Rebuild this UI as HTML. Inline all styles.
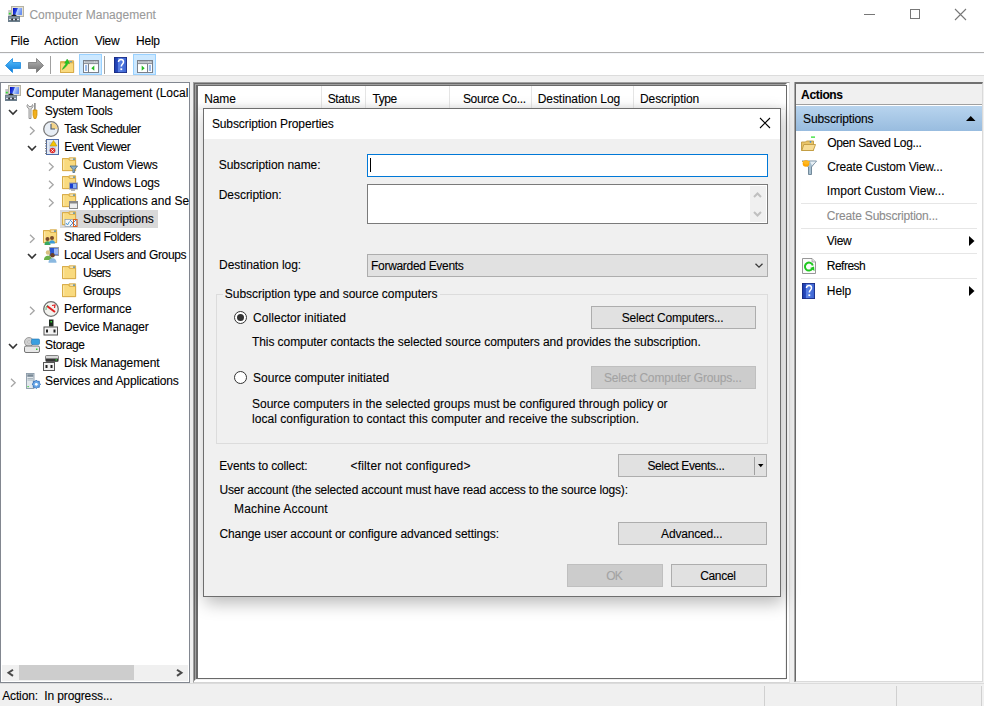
<!DOCTYPE html>
<html><head><meta charset="utf-8">
<style>
*{box-sizing:border-box;margin:0;padding:0}
html,body{width:984px;height:706px;overflow:hidden;background:#f0f0f0;position:relative}
body{font-family:"Liberation Sans",sans-serif;font-size:12px;color:#000}
.a{position:absolute}
.t{position:absolute;font-size:12px;line-height:16px;white-space:pre;color:#000;-webkit-text-stroke:0.1px currentColor}
svg{position:absolute;overflow:visible}
</style></head><body>

<!-- title bar + menu + toolbar (white) -->
<div class="a" style="left:0;top:0;width:984px;height:75px;background:#fff"></div>
<div class="a" style="left:0;top:52px;width:984px;height:1px;background:#b0b0b0"></div>
<div class="a" style="left:0;top:53px;width:984px;height:1px;background:#f4f6fa"></div>
<div class="a" style="left:0;top:75px;width:984px;height:7px;background:#f0f0f0;border-top:1px solid #dcdcdc"></div>

<!-- title icon -->
<svg style="left:8px;top:6px" width="16" height="16" viewBox="0 0 16 16"><defs><linearGradient id="scr2" x1="0" y1="0" x2="1" y2="0.3"><stop offset="0" stop-color="#0008b8"/><stop offset="0.45" stop-color="#2a48e0"/><stop offset="0.55" stop-color="#b8d0ff"/><stop offset="1" stop-color="#6a90f0"/></linearGradient></defs>
<rect x="3.5" y="0.5" width="12" height="10" fill="#e4e0d2" stroke="#b5b2a4"/>
<rect x="5" y="2" width="9" height="7" fill="url(#scr2)"/>
<rect x="0.3" y="4" width="3" height="6" fill="#c4c4c4"/><rect x="0.8" y="6.8" width="2" height="1.6" fill="#33dd33"/>
<path d="M3.5 10.5Q6 8 8.5 10.5" fill="none" stroke="#222" stroke-width="1.2"/>
<rect x="0" y="10" width="12" height="6" fill="#6c7e8c"/><rect x="1" y="11.5" width="10" height="1" fill="#a0acb6"/>
<rect x="3.5" y="12.5" width="1.3" height="2" fill="#222"/><rect x="7.3" y="12.5" width="1.3" height="2" fill="#222"/>
<rect x="1" y="13" width="2" height="1" fill="#dde"/><rect x="5" y="13" width="2" height="1" fill="#dde"/><rect x="9" y="13" width="2" height="1" fill="#dde"/></svg>

<!-- window controls -->
<div class="a" style="left:864px;top:14px;width:11px;height:1px;background:#777"></div>
<div class="a" style="left:910px;top:9px;width:10px;height:10px;border:1px solid #777"></div>
<svg style="left:955px;top:9px" width="11" height="11" viewBox="0 0 11 11"><path d="M0 0L11 11M11 0L0 11" stroke="#777" stroke-width="1.1"/></svg>

<!-- toolbar icons -->
<svg style="left:5px;top:58px" width="16" height="15" viewBox="0 0 16 15">
  <defs><linearGradient id="gb" x1="0" y1="0" x2="0" y2="1"><stop offset="0" stop-color="#5cc4ff"/><stop offset="1" stop-color="#0a78d8"/></linearGradient></defs>
  <path d="M0.5 7.5L7.5 0.5V4.5H15.5V10.5H7.5V14.5Z" fill="url(#gb)" stroke="#1a8ae0" stroke-width="0.8"/>
</svg>
<svg style="left:28px;top:58px" width="16" height="15" viewBox="0 0 16 15">
  <defs><linearGradient id="gg" x1="0" y1="0" x2="0" y2="1"><stop offset="0" stop-color="#b8b8b8"/><stop offset="1" stop-color="#6e6e6e"/></linearGradient></defs>
  <path d="M15.5 7.5L8.5 0.5V4.5H0.5V10.5H8.5V14.5Z" fill="url(#gg)" stroke="#777" stroke-width="0.8"/>
</svg>
<div class="a" style="left:50px;top:56px;width:1px;height:18px;background:#a0a0a0"></div>
<svg style="left:60px;top:58px" width="15" height="15" viewBox="0 0 15 15">
<path d="M0.5 3.6H6.2L7.2 2.8H13.6V14.5H0.5Z" fill="#ecc25a" stroke="#d2a440" stroke-width="0.8"/>
<rect x="9.5" y="3.4" width="2.5" height="1.1" fill="#2e8de6"/>
<path d="M0.5 4.8H13.6V14.5H0.5Z" fill="#f9da7e" stroke="#d2a440" stroke-width="0.8"/>
<path d="M2.3 11.5C3.5 8.5 5 7.5 6.3 5.5L4.6 5.2L7.2 1L9.6 5.6L7.9 5.6C7 8 5 10 2.3 11.5Z" fill="#22c822" stroke="#1a9a1a" stroke-width="0.4"/>
</svg>
<div class="a" style="left:79px;top:54px;width:23px;height:21px;background:#cce8ff;border:1px solid #99d1ff"></div>
<svg style="left:83px;top:60px" width="16" height="13" viewBox="0 0 16 13">
<rect x="0.5" y="0.5" width="15" height="12" fill="#fff" stroke="#7a808a"/>
<rect x="1" y="1" width="14" height="2.5" fill="#dfe2e6"/><path d="M1.5 1.9H11.5" stroke="#8a9099" stroke-width="0.9"/><rect x="12.3" y="1.4" width="1" height="1" fill="#7a808a"/><rect x="13.8" y="1.4" width="1" height="1" fill="#7a808a"/>
<path d="M1 3.6H15" stroke="#7a808a" stroke-width="0.9"/><path d="M5.5 4V12" stroke="#7a808a" stroke-width="1"/><rect x="2" y="5.5" width="2.2" height="1" fill="#3a7ad8"/><rect x="2" y="7.5" width="2.2" height="1" fill="#3a7ad8"/><rect x="2" y="9.5" width="2.2" height="1" fill="#3a7ad8"/><path d="M11.3 5.5V10.8L8.3 8.15Z" fill="#22bb22"/></svg>
<div class="a" style="left:104px;top:56px;width:1px;height:18px;background:#a0a0a0"></div>
<svg style="left:114px;top:57px" width="13" height="16" viewBox="0 0 13 16"><defs><linearGradient id="hb2" x1="0" y1="0" x2="1" y2="0"><stop offset="0" stop-color="#1a3aa8"/><stop offset="0.3" stop-color="#2a4cc0"/><stop offset="0.35" stop-color="#5a82e6"/><stop offset="1" stop-color="#3a62d0"/></linearGradient></defs>
<rect x="0" y="0" width="13" height="16" fill="url(#hb2)"/><rect x="0.4" y="0.4" width="12.2" height="15.2" fill="none" stroke="#1a2a80" stroke-width="0.8"/>
<path d="M4.5 5C4.5 3.2 5.8 2.5 7 2.5C8.5 2.5 9.5 3.5 9.5 5C9.5 6.8 7.3 7.2 7.3 9.5" fill="none" stroke="#fff" stroke-width="1.5"/><rect x="6.4" y="11.3" width="1.8" height="1.8" fill="#fff"/></svg>
<div class="a" style="left:133px;top:54px;width:23px;height:21px;background:#cce8ff;border:1px solid #99d1ff"></div>
<svg style="left:137px;top:60px" width="16" height="13" viewBox="0 0 16 13">
<rect x="0.5" y="0.5" width="15" height="12" fill="#fff" stroke="#7a808a"/>
<rect x="1" y="1" width="14" height="2.5" fill="#dfe2e6"/><path d="M1.5 1.9H11.5" stroke="#8a9099" stroke-width="0.9"/><rect x="12.3" y="1.4" width="1" height="1" fill="#7a808a"/><rect x="13.8" y="1.4" width="1" height="1" fill="#7a808a"/>
<path d="M1 3.6H15" stroke="#7a808a" stroke-width="0.9"/><path d="M10.5 4V12" stroke="#7a808a" stroke-width="1"/><rect x="11.8" y="5.5" width="2.2" height="1" fill="#3a7ad8"/><rect x="11.8" y="7.5" width="2.2" height="1" fill="#3a7ad8"/><rect x="11.8" y="9.5" width="2.2" height="1" fill="#3a7ad8"/><path d="M4.7 5.5V10.8L7.7 8.15Z" fill="#22bb22"/></svg>

<!-- LEFT PANEL -->
<div class="a" style="left:0;top:82px;width:190px;height:601px;background:#fff;border:1px solid #828790"></div>
<div class="a" style="left:0;top:0;width:189px;height:681px;overflow:hidden">
<div class="a" style="left:60px;top:210px;width:98px;height:18px;background:#d9d9d9"></div>
<svg style="left:5px;top:85px" width="16" height="16" viewBox="0 0 16 16"><defs><linearGradient id="scr" x1="0" y1="0" x2="1" y2="0.3"><stop offset="0" stop-color="#0008b8"/><stop offset="0.45" stop-color="#2a48e0"/><stop offset="0.55" stop-color="#b8d0ff"/><stop offset="1" stop-color="#6a90f0"/></linearGradient></defs>
<rect x="3.5" y="0.5" width="12" height="10" fill="#e4e0d2" stroke="#b5b2a4"/>
<rect x="5" y="2" width="9" height="7" fill="url(#scr)"/>
<rect x="0.3" y="4" width="3" height="6" fill="#c4c4c4"/><rect x="0.8" y="6.8" width="2" height="1.6" fill="#33dd33"/>
<path d="M3.5 10.5Q6 8 8.5 10.5" fill="none" stroke="#222" stroke-width="1.2"/>
<rect x="0" y="10" width="12" height="6" fill="#6c7e8c"/><rect x="1" y="11.5" width="10" height="1" fill="#a0acb6"/>
<rect x="3.5" y="12.5" width="1.3" height="2" fill="#222"/><rect x="7.3" y="12.5" width="1.3" height="2" fill="#222"/>
<rect x="1" y="13" width="2" height="1" fill="#dde"/><rect x="5" y="13" width="2" height="1" fill="#dde"/><rect x="9" y="13" width="2" height="1" fill="#dde"/></svg>
<svg style="left:26px;top:103px" width="16" height="16" viewBox="0 0 16 16"><path d="M1.5 1.5C0.5 3 1 5 3 5.5V15.5H5V5.5C7 5 7.5 3 6.5 1.5L5.5 3.5H3Z" fill="#e6e6e6" stroke="#8c8c8c" stroke-width="0.9"/>
<rect x="8.3" y="0" width="1.2" height="7" fill="#666"/>
<path d="M7 7H11V12L10 15.5H8L7 12Z" fill="#f2b01e" stroke="#c98a00" stroke-width="0.7"/></svg>
<svg style="left:7.5px;top:109px" width="10" height="7" viewBox="0 0 10 7"><path d="M1 1L5 5L9 1" fill="none" stroke="#333" stroke-width="1.6"/></svg>
<svg style="left:43px;top:121px" width="16" height="16" viewBox="0 0 16 16"><circle cx="8" cy="8" r="7.3" fill="#e8eef5" stroke="#7a7a7a" stroke-width="1.3"/>
<path d="M8 8V1.5A6.5 6.5 0 0 1 14.5 8Z" fill="#f3d48a"/>
<path d="M8 3V8H12" fill="none" stroke="#4a5a70" stroke-width="1.1"/></svg>
<svg style="left:29.0px;top:126px" width="7" height="10" viewBox="0 0 7 10"><path d="M1 0.8L5.2 4.8L1 8.8" fill="none" stroke="#a6a6a6" stroke-width="1.3"/></svg>
<svg style="left:44px;top:139px" width="16" height="16" viewBox="0 0 16 16"><rect x="2.5" y="0.5" width="12" height="15" fill="#dfe8f4" stroke="#4d6aa8"/>
<path d="M1 2H3M1 4.5H3M1 7H3M1 9.5H3M1 12H3M1 14.5H3" stroke="#777" stroke-width="0.9"/>
<path d="M5 4H12M5 6H12M5 8H12M5 10H12M5 12H12" stroke="#9fb6d8" stroke-width="0.8"/>
<path d="M9.5 1.5L13 7H6Z" fill="#f5c400" stroke="#b08800" stroke-width="0.5"/>
<circle cx="8.5" cy="11.5" r="2.8" fill="#e03030"/><path d="M7.3 10.3L9.7 12.7M9.7 10.3L7.3 12.7" stroke="#fff" stroke-width="0.8"/></svg>
<svg style="left:26.5px;top:145px" width="10" height="7" viewBox="0 0 10 7"><path d="M1 1L5 5L9 1" fill="none" stroke="#333" stroke-width="1.6"/></svg>
<svg style="left:62px;top:157px" width="16" height="16" viewBox="0 0 16 16"><path d="M0.5 1.6H6.2L7.2 0.8H13.6V13.6H0.5Z" fill="#ecc25a" stroke="#d2a440" stroke-width="0.8"/>
<rect x="8.2" y="1.6" width="3" height="1.1" fill="#fff"/><rect x="11" y="1.6" width="2" height="1.1" fill="#2e8de6"/>
<path d="M0.5 1.6H6.2L7.4 3.3H13.6V13.6H0.5Z" fill="#f9da7e" stroke="#d2a440" stroke-width="0.8"/>
<rect x="1.2" y="2.6" width="1" height="10.3" fill="#fdeab0"/><path d="M8 9H15.5L12.6 12.5V15.5H10.9V12.5Z" fill="#8fb2c8" stroke="#4a6a80" stroke-width="0.8"/></svg>
<svg style="left:48.0px;top:162px" width="7" height="10" viewBox="0 0 7 10"><path d="M1 0.8L5.2 4.8L1 8.8" fill="none" stroke="#a6a6a6" stroke-width="1.3"/></svg>
<svg style="left:62px;top:175px" width="16" height="16" viewBox="0 0 16 16"><path d="M0.5 1.6H6.2L7.2 0.8H13.6V13.6H0.5Z" fill="#ecc25a" stroke="#d2a440" stroke-width="0.8"/>
<rect x="8.2" y="1.6" width="3" height="1.1" fill="#fff"/><rect x="11" y="1.6" width="2" height="1.1" fill="#2e8de6"/>
<path d="M0.5 1.6H6.2L7.4 3.3H13.6V13.6H0.5Z" fill="#f9da7e" stroke="#d2a440" stroke-width="0.8"/>
<rect x="1.2" y="2.6" width="1" height="10.3" fill="#fdeab0"/><rect x="7.5" y="8" width="8" height="6" fill="#1a3fd0" stroke="#a0a0a0"/><rect x="11" y="9" width="3.5" height="4" fill="#8ab0f0"/><rect x="9" y="14.5" width="4" height="1.2" fill="#999"/></svg>
<svg style="left:48.0px;top:180px" width="7" height="10" viewBox="0 0 7 10"><path d="M1 0.8L5.2 4.8L1 8.8" fill="none" stroke="#a6a6a6" stroke-width="1.3"/></svg>
<svg style="left:62px;top:193px" width="16" height="16" viewBox="0 0 16 16"><path d="M0.5 1.6H6.2L7.2 0.8H13.6V13.6H0.5Z" fill="#ecc25a" stroke="#d2a440" stroke-width="0.8"/>
<rect x="8.2" y="1.6" width="3" height="1.1" fill="#fff"/><rect x="11" y="1.6" width="2" height="1.1" fill="#2e8de6"/>
<path d="M0.5 1.6H6.2L7.4 3.3H13.6V13.6H0.5Z" fill="#f9da7e" stroke="#d2a440" stroke-width="0.8"/>
<rect x="1.2" y="2.6" width="1" height="10.3" fill="#fdeab0"/><rect x="7.5" y="8.5" width="8" height="7" fill="#eeeeee" stroke="#888"/><rect x="8" y="9" width="7" height="1.5" fill="#888"/></svg>
<svg style="left:48.0px;top:198px" width="7" height="10" viewBox="0 0 7 10"><path d="M1 0.8L5.2 4.8L1 8.8" fill="none" stroke="#a6a6a6" stroke-width="1.3"/></svg>
<svg style="left:62px;top:211px" width="16" height="16" viewBox="0 0 16 16"><path d="M0.5 1.6H6.2L7.2 0.8H13.6V13.6H0.5Z" fill="#ecc25a" stroke="#d2a440" stroke-width="0.8"/>
<rect x="8.2" y="1.6" width="3" height="1.1" fill="#fff"/><rect x="11" y="1.6" width="2" height="1.1" fill="#2e8de6"/>
<path d="M0.5 1.6H6.2L7.4 3.3H13.6V13.6H0.5Z" fill="#f9da7e" stroke="#d2a440" stroke-width="0.8"/>
<rect x="1.2" y="2.6" width="1" height="10.3" fill="#fdeab0"/><rect x="3" y="8.5" width="12" height="7" fill="#f4f8fc" stroke="#8899aa" stroke-width="0.7"/><path d="M8 9L14 15M14 9L8 15" stroke="#5a8ac8" stroke-width="1"/><rect x="11.5" y="8.5" width="3.5" height="7" fill="none" stroke="#e06020" stroke-width="1"/><path d="M4 12L5.5 14L7.5 10.5" fill="none" stroke="#3a90d0" stroke-width="0.9"/></svg>
<svg style="left:43px;top:229px" width="16" height="16" viewBox="0 0 16 16"><path d="M0.5 1.6H6.2L7.2 0.8H13.6V13.6H0.5Z" fill="#ecc25a" stroke="#d2a440" stroke-width="0.8"/>
<rect x="8.2" y="1.6" width="3" height="1.1" fill="#fff"/><rect x="11" y="1.6" width="2" height="1.1" fill="#2e8de6"/>
<path d="M0.5 1.6H6.2L7.4 3.3H13.6V13.6H0.5Z" fill="#f9da7e" stroke="#d2a440" stroke-width="0.8"/>
<rect x="1.2" y="2.6" width="1" height="10.3" fill="#fdeab0"/><circle cx="4.5" cy="10" r="2" fill="#7a4a2a"/><path d="M1.5 16C1.5 13 3 12.3 4.5 12.3S7.5 13 7.5 16Z" fill="#3aa860"/>
<circle cx="9" cy="9" r="2" fill="#7a4a2a"/><path d="M6 14.5C6 11.8 7.5 11.2 9 11.2S12 11.8 12 14.5Z" fill="#3a9ad8"/></svg>
<svg style="left:29.0px;top:234px" width="7" height="10" viewBox="0 0 7 10"><path d="M1 0.8L5.2 4.8L1 8.8" fill="none" stroke="#a6a6a6" stroke-width="1.3"/></svg>
<svg style="left:43px;top:247px" width="16" height="16" viewBox="0 0 16 16"><rect x="6.5" y="0.5" width="9" height="8" fill="#2a55d0" stroke="#a0a0a0"/><rect x="11" y="1.5" width="4" height="6" fill="#9cb8f2"/>
<circle cx="5" cy="5.5" r="2.2" fill="#d8c080"/><path d="M1 13C1 9.8 3 8.8 5 8.8S9 9.8 9 13Z" fill="#6ab04a"/>
<circle cx="9.5" cy="8.3" r="2.3" fill="#6a4028"/><path d="M5.5 15.8C5.5 12.5 7.5 11.3 9.5 11.3S13.5 12.5 13.5 15.8Z" fill="#8ab8e0"/></svg>
<svg style="left:26.5px;top:253px" width="10" height="7" viewBox="0 0 10 7"><path d="M1 1L5 5L9 1" fill="none" stroke="#333" stroke-width="1.6"/></svg>
<svg style="left:62px;top:265px" width="16" height="16" viewBox="0 0 16 16"><path d="M0.5 1.6H6.2L7.2 0.8H13.6V13.6H0.5Z" fill="#ecc25a" stroke="#d2a440" stroke-width="0.8"/>
<rect x="8.2" y="1.6" width="3" height="1.1" fill="#fff"/><rect x="11" y="1.6" width="2" height="1.1" fill="#2e8de6"/>
<path d="M0.5 1.6H6.2L7.4 3.3H13.6V13.6H0.5Z" fill="#f9da7e" stroke="#d2a440" stroke-width="0.8"/>
<rect x="1.2" y="2.6" width="1" height="10.3" fill="#fdeab0"/></svg>
<svg style="left:62px;top:283px" width="16" height="16" viewBox="0 0 16 16"><path d="M0.5 1.6H6.2L7.2 0.8H13.6V13.6H0.5Z" fill="#ecc25a" stroke="#d2a440" stroke-width="0.8"/>
<rect x="8.2" y="1.6" width="3" height="1.1" fill="#fff"/><rect x="11" y="1.6" width="2" height="1.1" fill="#2e8de6"/>
<path d="M0.5 1.6H6.2L7.4 3.3H13.6V13.6H0.5Z" fill="#f9da7e" stroke="#d2a440" stroke-width="0.8"/>
<rect x="1.2" y="2.6" width="1" height="10.3" fill="#fdeab0"/></svg>
<svg style="left:43px;top:301px" width="16" height="16" viewBox="0 0 16 16"><circle cx="8" cy="8" r="7.3" fill="#f2f2ee" stroke="#707070" stroke-width="1.3"/>
<path d="M4 5L12 11" stroke="#e02020" stroke-width="2"/><path d="M9 4.5L12 4L11.5 7" stroke="#e02020" stroke-width="1.2" fill="none"/><path d="M3 9A5 5 0 0 1 5 4" stroke="#3a9a5a" stroke-width="0.8" fill="none"/></svg>
<svg style="left:29.0px;top:306px" width="7" height="10" viewBox="0 0 7 10"><path d="M1 0.8L5.2 4.8L1 8.8" fill="none" stroke="#a6a6a6" stroke-width="1.3"/></svg>
<svg style="left:43px;top:319px" width="16" height="16" viewBox="0 0 16 16"><rect x="6" y="0.5" width="4.5" height="7" fill="#1e2a20"/><rect x="7.5" y="2" width="1.5" height="1.5" fill="#33dd33"/>
<rect x="1" y="8" width="13.5" height="8" fill="#f2f2f2" stroke="#555" stroke-width="1"/><rect x="3" y="10.5" width="2" height="3" fill="#222"/><rect x="10.5" y="10.5" width="2" height="3" fill="#222"/></svg>
<svg style="left:24px;top:337px" width="16" height="16" viewBox="0 0 16 16"><circle cx="5" cy="5" r="4.5" fill="#d0d0d0" stroke="#8a8a8a" stroke-width="0.8"/><circle cx="5" cy="5" r="1.2" fill="#fff" stroke="#888" stroke-width="0.5"/>
<rect x="7.5" y="2" width="8" height="5.5" rx="1" fill="#3aa0e0" stroke="#1a70b0" stroke-width="0.6"/>
<rect x="0.5" y="9" width="15" height="6.5" rx="1.5" fill="#e8e8e8" stroke="#666" stroke-width="0.9"/><rect x="12" y="11.5" width="1.5" height="1.5" fill="#33cc33"/></svg>
<svg style="left:7.5px;top:343px" width="10" height="7" viewBox="0 0 10 7"><path d="M1 1L5 5L9 1" fill="none" stroke="#333" stroke-width="1.6"/></svg>
<svg style="left:43px;top:355px" width="16" height="16" viewBox="0 0 16 16"><rect x="2.5" y="0.5" width="13" height="6" rx="1" fill="#d8d8d8" stroke="#666" stroke-width="0.8"/><rect x="3" y="3.5" width="12" height="3" fill="#333"/><rect x="12.5" y="4.3" width="1.5" height="1.2" fill="#33dd33"/>
<rect x="0.5" y="7.5" width="11" height="8" fill="#f2f2f2" stroke="#555" stroke-width="1"/><rect x="2.5" y="10" width="2" height="3" fill="#222"/><rect x="7.5" y="10" width="2" height="3" fill="#222"/></svg>
<svg style="left:25px;top:373px" width="16" height="16" viewBox="0 0 16 16"><rect x="1.5" y="0.5" width="7.5" height="15" fill="#e2e8ec" stroke="#8a9aa8" stroke-width="0.9"/><rect x="2.3" y="1.3" width="6" height="2.5" fill="#7a8a98"/><path d="M2.5 5.5H8M2.5 7H8" stroke="#9aa8b4" stroke-width="0.8"/><rect x="2.5" y="13" width="1.2" height="1.2" fill="#33cc33"/>
<path d="M15.60 11.30 L14.26 12.52 L14.34 14.34 L12.52 14.26 L11.30 15.60 L10.08 14.26 L8.26 14.34 L8.34 12.52 L7.00 11.30 L8.34 10.08 L8.26 8.26 L10.08 8.34 L11.30 7.00 L12.52 8.34 L14.34 8.26 L14.26 10.08Z" fill="#6aa8e8" stroke="#2a68b8" stroke-width="0.8"/><circle cx="11.3" cy="11.3" r="1.4" fill="#fff"/></svg>
<svg style="left:10.0px;top:378px" width="7" height="10" viewBox="0 0 7 10"><path d="M1 0.8L5.2 4.8L1 8.8" fill="none" stroke="#a6a6a6" stroke-width="1.3"/></svg>
<div class="t tree" style="left:26.3px;top:85px;">Computer Management (Local</div>
<div class="t tree" style="left:44.8px;top:103px;letter-spacing:-0.287px;">System Tools</div>
<div class="t tree" style="left:64.3px;top:121px;letter-spacing:-0.410px;">Task Scheduler</div>
<div class="t tree" style="left:64.3px;top:139px;letter-spacing:-0.365px;">Event Viewer</div>
<div class="t tree" style="left:83.0px;top:157px;letter-spacing:-0.157px;">Custom Views</div>
<div class="t tree" style="left:83.0px;top:175px;letter-spacing:-0.112px;">Windows Logs</div>
<div class="t tree" style="left:83.0px;top:193px;">Applications and Services Logs</div>
<div class="t tree" style="left:83.0px;top:211px;letter-spacing:-0.111px;">Subscriptions</div>
<div class="t tree" style="left:64.1px;top:229px;letter-spacing:-0.389px;">Shared Folders</div>
<div class="t tree" style="left:64.1px;top:247px;letter-spacing:-0.328px;">Local Users and Groups</div>
<div class="t tree" style="left:83.0px;top:265px;letter-spacing:-0.829px;">Users</div>
<div class="t tree" style="left:83.0px;top:283px;letter-spacing:-0.327px;">Groups</div>
<div class="t tree" style="left:64.1px;top:301px;letter-spacing:-0.118px;">Performance</div>
<div class="t tree" style="left:64.1px;top:319px;letter-spacing:-0.212px;">Device Manager</div>
<div class="t tree" style="left:45.0px;top:337px;letter-spacing:-0.333px;">Storage</div>
<div class="t tree" style="left:64.1px;top:355px;letter-spacing:-0.088px;">Disk Management</div>
<div class="t tree" style="left:45.0px;top:373px;letter-spacing:-0.122px;">Services and Applications</div>
</div>

<!-- scrollbar -->
<div class="a" style="left:2px;top:665px;width:186px;height:16px;background:#f0f0f0"></div>
<div class="a" style="left:19px;top:665px;width:115px;height:15px;background:#cdcdcd"></div>
<svg style="left:7px;top:669px" width="7" height="8" viewBox="0 0 7 8"><path d="M6 0.7L1.5 3.8L6 6.9" fill="none" stroke="#4a4a4a" stroke-width="2"/></svg>
<svg style="left:176px;top:669px" width="7" height="8" viewBox="0 0 7 8"><path d="M1 0.7L5.5 3.8L1 6.9" fill="none" stroke="#4a4a4a" stroke-width="2"/></svg>

<!-- MIDDLE PANEL frame -->
<div class="a" style="left:193px;top:82px;width:597px;height:601px;background:#fff;border-left:1px solid #a0a0a0;border-top:1px solid #a0a0a0;border-right:1px solid #e3e3e3;border-bottom:1px solid #d5d5d5"></div>
<div class="a" style="left:194px;top:83px;width:593px;height:598px;border-left:1px solid #696969;border-top:1px solid #696969;border-right:1px solid #fff;border-bottom:1px solid #fff"></div>
<div class="a" style="left:195px;top:84px;width:591px;height:596px;border-left:1px solid #a0a0a0;border-top:1px solid #a0a0a0;border-right:1px solid #f0f0f0;border-bottom:1px solid #f0f0f0"></div>
<div class="a" style="left:196px;top:85px;width:591px;height:594px;border-left:2px solid #696969;border-top:1px solid #696969;border-right:1px solid #696969;border-bottom:1px solid #696969"></div>
<!-- list header -->
<div class="a" style="left:198px;top:86px;width:588px;height:24px;background:linear-gradient(#fff 0,#fff 70%,#f2f2f2 100%)"></div>
<div class="a" style="left:321px;top:86px;width:1px;height:24px;background:#e5e5e5"></div>
<div class="a" style="left:365px;top:86px;width:1px;height:24px;background:#e5e5e5"></div>
<div class="a" style="left:449px;top:86px;width:1px;height:24px;background:#e5e5e5"></div>
<div class="a" style="left:531px;top:86px;width:1px;height:24px;background:#e5e5e5"></div>
<div class="a" style="left:633px;top:86px;width:1px;height:24px;background:#e5e5e5"></div>

<!-- ACTIONS PANEL -->
<div class="a" style="left:794px;top:82px;width:1px;height:600px;background:#a8a8a8"></div>
<div class="a" style="left:795px;top:82px;width:188px;height:600px;background:#fff;border-left:1px solid #696969;border-top:2px solid #707070;border-right:1px solid #dadada;border-bottom:1px solid #dadada"></div>
<div class="a" style="left:796px;top:84px;width:186px;height:21px;background:#f0f0f0;border-bottom:1px solid #a0a0a0"></div>
<div class="a" style="left:796px;top:106px;width:186px;height:25px;background:linear-gradient(#b8d4ee,#98bcdf)"></div>
<svg style="left:966px;top:116px" width="9.5" height="5" viewBox="0 0 9.5 5"><path d="M0 5L4.75 0L9.5 5Z" fill="#000"/></svg>
<div class="a" style="left:801px;top:203px;width:176px;height:1px;background:#e6e6e6"></div>
<div class="a" style="left:801px;top:228px;width:176px;height:1px;background:#e6e6e6"></div>
<div class="a" style="left:801px;top:253px;width:176px;height:1px;background:#e6e6e6"></div>
<div class="a" style="left:801px;top:278px;width:176px;height:1px;background:#e6e6e6"></div>
<svg style="left:801px;top:136px" width="16" height="16" viewBox="0 0 16 16"><rect x="10" y="0.5" width="4" height="1.2" fill="#22dd22"/>
<path d="M0.5 6H4.5L5.5 5H12.5V14.5H0.5Z" fill="#e9c468" stroke="#c09a40" stroke-width="0.9"/>
<circle cx="9.5" cy="5.8" r="0.9" fill="#3a8ae0"/>
<path d="M2.8 8.5H14.5L12.3 14.5H0.8Z" fill="#f7dc94" stroke="#c09a40" stroke-width="0.9"/></svg>
<svg style="left:801px;top:160px" width="16" height="16" viewBox="0 0 16 16"><path d="M1 1H15.5L10.5 7V14.5H7.5V7Z" fill="#a8c0d0" stroke="#5a7488" stroke-width="0.8"/>
<path d="M9 1.5H15L11 5.5Z" fill="#e8f0f6"/>
<circle cx="5" cy="3.5" r="3.3" fill="#ffa500"/><path d="M1 1H9L7 4.5H4Z" fill="#ffb820"/></svg>
<svg style="left:802px;top:258px" width="16" height="16" viewBox="0 0 16 16"><path d="M0.5 0.5H10L13.5 4V15.5H0.5Z" fill="#fbfbfb" stroke="#8c8c8c" stroke-width="0.9"/><path d="M10 0.5V4H13.5" fill="#e0e0e0" stroke="#8c8c8c" stroke-width="0.6"/>
<path d="M10.3 10.8A4 4 0 1 1 10.8 7.5" fill="none" stroke="#1ec81e" stroke-width="2"/><path d="M8 10L12.5 13L12 8.5Z" fill="#1ec81e"/></svg>
<svg style="left:802px;top:283px" width="16" height="16" viewBox="0 0 16 16"><defs><linearGradient id="hb" x1="0" y1="0" x2="1" y2="0"><stop offset="0" stop-color="#1a3aa8"/><stop offset="0.3" stop-color="#2a4cc0"/><stop offset="0.35" stop-color="#5a82e6"/><stop offset="1" stop-color="#3a62d0"/></linearGradient></defs>
<rect x="0" y="0" width="13" height="16" fill="url(#hb)"/><rect x="0.4" y="0.4" width="12.2" height="15.2" fill="none" stroke="#1a2a80" stroke-width="0.8"/>
<path d="M4.5 5C4.5 3.2 5.8 2.5 7 2.5C8.5 2.5 9.5 3.5 9.5 5C9.5 6.8 7.3 7.2 7.3 9.5" fill="none" stroke="#fff" stroke-width="1.5"/><rect x="6.4" y="11.3" width="1.8" height="1.8" fill="#fff"/></svg>
<svg style="left:969px;top:236px" width="6" height="10" viewBox="0 0 6 10"><path d="M0 0L5.5 5L0 10Z" fill="#000"/></svg>
<svg style="left:969px;top:286px" width="6" height="10" viewBox="0 0 6 10"><path d="M0 0L5.5 5L0 10Z" fill="#000"/></svg>

<!-- STATUS BAR -->
<div class="a" style="left:0;top:683px;width:984px;height:23px;background:#f0f0f0;border-top:1px solid #dcdcdc"></div>
<div class="a" style="left:764px;top:686px;width:1px;height:20px;background:#d0d0d0"></div>
<div class="a" style="left:896px;top:686px;width:1px;height:20px;background:#d0d0d0"></div>
<div class="a" style="left:981px;top:686px;width:1px;height:20px;background:#d0d0d0"></div>

<div class="t " style="left:29.4px;top:7px;letter-spacing:0.027px;color:#9a9a9a">Computer Management</div>
<div class="t " style="left:10.4px;top:33px;letter-spacing:-0.136px;">File</div>
<div class="t " style="left:44.3px;top:33px;letter-spacing:0.107px;">Action</div>
<div class="t " style="left:94.7px;top:33px;letter-spacing:-0.274px;">View</div>
<div class="t " style="left:136.1px;top:33px;letter-spacing:-0.272px;">Help</div>
<div class="t " style="left:204.2px;top:91px;letter-spacing:-0.129px;">Name</div>
<div class="t " style="left:327.7px;top:91px;letter-spacing:-0.339px;">Status</div>
<div class="t " style="left:372.5px;top:91px;letter-spacing:-0.454px;">Type</div>
<div class="t " style="left:462.9px;top:91px;letter-spacing:-0.325px;">Source Co...</div>
<div class="t " style="left:537.7px;top:91px;letter-spacing:-0.059px;">Destination Log</div>
<div class="t " style="left:640.0px;top:91px;letter-spacing:-0.076px;">Description</div>
<div class="t " style="left:801.1px;top:87px;letter-spacing:-0.346px;"><b>Actions</b></div>
<div class="t " style="left:803.1px;top:111px;letter-spacing:-0.127px;">Subscriptions</div>
<div class="t " style="left:827.2px;top:135px;letter-spacing:-0.340px;">Open Saved Log...</div>
<div class="t " style="left:827.2px;top:159px;letter-spacing:-0.180px;">Create Custom View...</div>
<div class="t " style="left:826.8px;top:183px;letter-spacing:0.026px;">Import Custom View...</div>
<div class="t " style="left:826.8px;top:208px;letter-spacing:-0.190px;color:#8c8c8c">Create Subscription...</div>
<div class="t " style="left:826.8px;top:233px;letter-spacing:-0.299px;">View</div>
<div class="t " style="left:826.8px;top:258px;letter-spacing:-0.519px;">Refresh</div>
<div class="t " style="left:826.8px;top:283px;letter-spacing:-0.072px;">Help</div>
<div class="t " style="left:2.2px;top:688px;letter-spacing:-0.134px;">Action:&nbsp; In progress...</div>

<!-- DIALOG -->
<div class="a" style="left:203px;top:108px;width:578px;height:489px;background:#f0f0f0;border:1px solid #6e6e6e;box-shadow:2px 6px 16px rgba(0,0,0,0.28)"></div>
<div class="a" style="left:204px;top:109px;width:576px;height:30px;background:#fff"></div>
<svg style="left:760px;top:118px" width="10" height="10" viewBox="0 0 10 10"><path d="M0 0L10 10M10 0L0 10" stroke="#000" stroke-width="1.1"/></svg>

<!-- name input -->
<div class="a" style="left:367px;top:154px;width:401px;height:23px;background:#fff;border:1px solid #0078d7"></div>
<div class="a" style="left:370px;top:158px;width:1px;height:14px;background:#000"></div>
<!-- description -->
<div class="a" style="left:367px;top:184px;width:401px;height:40px;background:#fff;border:1px solid #7a7a7a"></div>
<div class="a" style="left:750px;top:186px;width:16px;height:36px;background:#f0f0f0"></div>
<svg style="left:753px;top:192px" width="9" height="6" viewBox="0 0 9 6"><path d="M1 5L4.5 1.5L8 5" fill="none" stroke="#c0c0c0" stroke-width="2"/></svg>
<svg style="left:753px;top:211px" width="9" height="6" viewBox="0 0 9 6"><path d="M1 1L4.5 4.5L8 1" fill="none" stroke="#c0c0c0" stroke-width="2"/></svg>
<!-- combo -->
<div class="a" style="left:367px;top:254px;width:401px;height:23px;background:#e1e1e1;border:1px solid #adadad"></div>
<svg style="left:755px;top:263px" width="8" height="5" viewBox="0 0 8 5"><path d="M0.5 0.7L4 4.2L7.5 0.7" fill="none" stroke="#3a3a3a" stroke-width="1.3"/></svg>
<!-- group box -->
<div class="a" style="left:216px;top:294px;width:552px;height:150px;border:1px solid #dcdcdc"></div>
<div class="a" style="left:223px;top:290px;width:217px;height:8px;background:#f0f0f0"></div>
<!-- radios -->
<div class="a" style="left:234px;top:311px;width:13px;height:13px;border-radius:50%;background:#fff;border:1px solid #333"></div>
<div class="a" style="left:237px;top:314px;width:7px;height:7px;border-radius:50%;background:#333"></div>
<div class="a" style="left:234px;top:371px;width:13px;height:13px;border-radius:50%;background:#fff;border:1px solid #333"></div>
<!-- buttons -->
<div class="a" style="left:591px;top:306px;width:165px;height:23px;background:#e1e1e1;border:1px solid #adadad"></div>
<div class="a" style="left:591px;top:366px;width:165px;height:23px;background:#cccccc;border:1px solid #bfbfbf"></div>
<div class="a" style="left:618px;top:454px;width:149px;height:23px;background:#e1e1e1;border:1px solid #adadad"></div>
<div class="a" style="left:754px;top:457px;width:1px;height:18px;background:#a0a0a0"></div>
<svg style="left:758px;top:464px" width="5.5" height="3.2" viewBox="0 0 5.5 3.2"><path d="M0 0H5.5L2.75 3.2Z" fill="#000"/></svg>
<div class="a" style="left:618px;top:522px;width:149px;height:23px;background:#e1e1e1;border:1px solid #adadad"></div>
<div class="a" style="left:567px;top:564px;width:96px;height:23px;background:#cccccc;border:1px solid #bfbfbf"></div>
<div class="a" style="left:671px;top:564px;width:96px;height:23px;background:#e1e1e1;border:1px solid #adadad"></div>

<div class="t " style="left:211.9px;top:116px;letter-spacing:-0.098px;">Subscription Properties</div>
<div class="t " style="left:218.8px;top:157px;letter-spacing:-0.057px;">Subscription name:</div>
<div class="t " style="left:218.7px;top:187px;letter-spacing:-0.038px;">Description:</div>
<div class="t " style="left:219.0px;top:257px;letter-spacing:-0.039px;">Destination log:</div>
<div class="t " style="left:371.1px;top:258px;letter-spacing:-0.312px;">Forwarded Events</div>
<div class="t " style="left:224.8px;top:286px;letter-spacing:-0.037px;">Subscription type and source computers</div>
<div class="t " style="left:253.1px;top:310px;letter-spacing:0.050px;">Collector initiated</div>
<div class="t " style="left:621.7px;top:310px;letter-spacing:-0.193px;">Select Computers...</div>
<div class="t " style="left:251.9px;top:334px;letter-spacing:-0.057px;">This computer contacts the selected source computers and provides the subscription.</div>
<div class="t " style="left:253.1px;top:370px;">Source computer initiated</div>
<div class="t " style="left:603.9px;top:370px;letter-spacing:-0.171px;color:#a3a3a3">Select Computer Groups...</div>
<div class="t " style="left:252.0px;top:396px;">Source computers in the selected groups must be configured through policy or</div>
<div class="t " style="left:252.0px;top:411px;letter-spacing:0.047px;">local configuration to contact this computer and receive the subscription.</div>
<div class="t " style="left:219.2px;top:458px;letter-spacing:-0.140px;">Events to collect:</div>
<div class="t " style="left:350.5px;top:458px;letter-spacing:0.175px;">&lt;filter not configured&gt;</div>
<div class="t " style="left:647.5px;top:458px;letter-spacing:-0.405px;">Select Events...</div>
<div class="t " style="left:219.4px;top:482px;letter-spacing:-0.153px;">User account (the selected account must have read access to the source logs):</div>
<div class="t " style="left:234.0px;top:501px;letter-spacing:0.161px;">Machine Account</div>
<div class="t " style="left:219.4px;top:526px;letter-spacing:-0.092px;">Change user account or configure advanced settings:</div>
<div class="t " style="left:661.1px;top:526px;letter-spacing:-0.198px;">Advanced...</div>
<div class="t " style="left:606.3px;top:568px;letter-spacing:-0.872px;color:#a3a3a3">OK</div>
<div class="t " style="left:700.2px;top:568px;letter-spacing:-0.327px;">Cancel</div>

</body></html>
